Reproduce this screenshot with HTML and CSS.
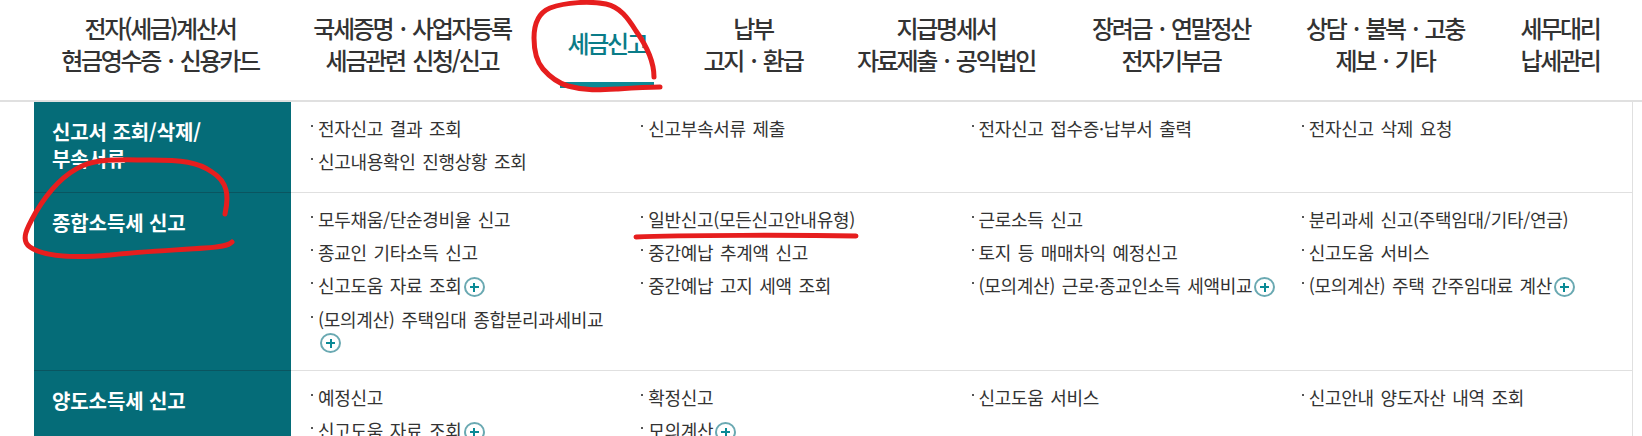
FILE: index.html
```html
<!DOCTYPE html>
<html lang="ko">
<head>
    <meta charset="UTF-8">
    <title>세금신고</title>
    <link rel="stylesheet" href="styles.css">
</head>
<body>

<nav class="gnb">
    <a class="gnb-item w1">전자(세금)계산서<br>현금영수증 · 신용카드</a>
    <a class="gnb-item w2">국세증명 · 사업자등록<br>세금관련 신청/신고</a>
    <a class="gnb-item w3 active">세금신고</a>
    <a class="gnb-item w4">납부<br>고지 · 환급</a>
    <a class="gnb-item w5">지급명세서<br>자료제출 · 공익법인</a>
    <a class="gnb-item w6">장려금 · 연말정산<br>전자기부금</a>
    <a class="gnb-item w7">상담 · 불복 · 고충<br>제보 · 기타</a>
    <a class="gnb-item w8">세무대리<br>납세관리</a>
</nav>

<div class="panel">
    <section class="group">
        <h3 class="group-title">신고서 조회/삭제/<br>부속서류</h3>
        <ul class="links">
            <li>전자신고 결과 조회</li>
            <li>신고부속서류 제출</li>
            <li>전자신고 접수증·납부서 출력</li>
            <li>전자신고 삭제 요청</li>
            <li>신고내용확인 진행상황 조회</li>
        </ul>
    </section>
    <section class="group">
        <h3 class="group-title">종합소득세 신고</h3>
        <ul class="links">
            <li>모두채움/단순경비율 신고</li>
            <li>일반신고(모든신고안내유형)</li>
            <li>근로소득 신고</li>
            <li>분리과세 신고(주택임대/기타/연금)</li>
            <li>종교인 기타소득 신고</li>
            <li>중간예납 추계액 신고</li>
            <li>토지 등 매매차익 예정신고</li>
            <li>신고도움 서비스</li>
            <li>신고도움 자료 조회<i class="plus"></i></li>
            <li>중간예납 고지 세액 조회</li>
            <li>(모의계산) 근로·종교인소득 세액비교<i class="plus"></i></li>
            <li>(모의계산) 주택 간주임대료 계산<i class="plus"></i></li>
            <li>(모의계산) 주택임대 종합분리과세비교 <i class="plus"></i></li>
        </ul>
    </section>
    <section class="group">
        <h3 class="group-title">양도소득세 신고</h3>
        <ul class="links">
            <li>예정신고</li>
            <li>확정신고</li>
            <li>신고도움 서비스</li>
            <li>신고안내 양도자산 내역 조회</li>
            <li>신고도움 자료 조회<i class="plus"></i></li>
            <li>모의계산<i class="plus"></i></li>
        </ul>
    </section>
</div>

<!-- red pen marks drawn over the capture -->
<svg class="marks" width="1642" height="436" viewBox="0 0 1642 436">
    <path d="M654 77C654 62 646 45 636 31C628 18 620 7 606 4C590 1 566 2 550 8C538 13 534 24 534 38C534 52 537 62 543 69C550 77 558 83 568 86C586 91 600 90 618 89C632 88 646 87 660 87"/>
    <path d="M225 214C229 196 228 182 212 172C198 162 182 160 150 160C125 160 100 158 82 166C62 175 48 192 36 212C27 228 20 240 30 247C44 257 76 258 110 255C145 251 180 250 205 248C220 247 228 246 232 242"/>
    <path d="M636 237C680 235 800 235 856 236"/>
</svg>

</body>
</html>
```
FILE: styles.css
```css
html, body {
    height: 436px;
    overflow: hidden;
}

body {
    margin: 0;
    background: #fff;
    color: #333;
    font-family: "Noto Sans CJK KR", "Noto Sans", sans-serif;
}

.gnb {
    display: flex;
    height: 100px;
    border-bottom: 2px solid #e0e0e0;
    padding-left: 46px;
}

.gnb-item {
    position: relative;
    flex: none;
    padding-top: 12px;
    text-align: center;
    font-size: 24px;
    font-weight: 500;
    line-height: 32px;
    letter-spacing: -2.3px;
    word-spacing: 3px;
    white-space: nowrap;
}

.w1 { width: 228px; }
.w2 { width: 276px; }
.w3 { width: 114px; }
.w4 { width: 178px; }
.w5 { width: 208px; }
.w6 { width: 242px; }
.w7 { width: 186px; }
.w8 { width: 164px; }

.gnb-item.active {
    padding-top: 27px;
    color: #0a7c88;
}

.gnb-item.active::after {
    content: "";
    position: absolute;
    left: 10px;
    right: 10px;
    top: 82px;
    height: 6px;
    background: #0a8a96;
}

.panel {
    margin: 0 9px 0 34px;
    border-right: 1px solid #e0e0e0;
}

.group {
    display: flex;
    border-bottom: 1px solid #e0e0e0;
}

.group-title {
    flex: none;
    box-sizing: border-box;
    width: 257px;
    margin: 0 0 -1px;
    padding: 16px 18px 20px;
    background: #056c78;
    border-bottom: 1px solid #0a5560;
    color: #fff;
    font-size: 20px;
    font-weight: 700;
    line-height: 27px;
    letter-spacing: -0.1px;
}

.links {
    flex: 1;
    display: grid;
    grid-template-columns: repeat(4, 1fr);
    align-content: start;
    margin: 0;
    padding: 15px 0 6px 20px;
    list-style: none;
    font-size: 18px;
    line-height: 22px;
    letter-spacing: -0.3px;
    word-spacing: 2px;
}

.links li {
    position: relative;
    padding: 0 20px 11px 7px;
}

.links li::before {
    content: "";
    position: absolute;
    left: 0;
    top: 8px;
    width: 2px;
    height: 2px;
    background: #555;
}

.plus {
    position: relative;
    display: inline-block;
    box-sizing: border-box;
    width: 21px;
    height: 20px;
    margin-left: 2px;
    border: 2px solid #6aa9b2;
    border-radius: 50%;
    vertical-align: top;
    margin-top: 3px;
}

.plus::before,
.plus::after {
    content: "";
    position: absolute;
    background: #0a8a96;
}

.plus::before {
    left: 4px;
    top: 7px;
    width: 9px;
    height: 2px;
}

.plus::after {
    left: 7.5px;
    top: 3.5px;
    width: 2px;
    height: 9px;
}

.marks {
    position: absolute;
    left: 0;
    top: 0;
    pointer-events: none;
}

.marks path {
    fill: none;
    stroke: #e61e1e;
    stroke-width: 5;
    stroke-linecap: round;
    stroke-linejoin: round;
}
```
